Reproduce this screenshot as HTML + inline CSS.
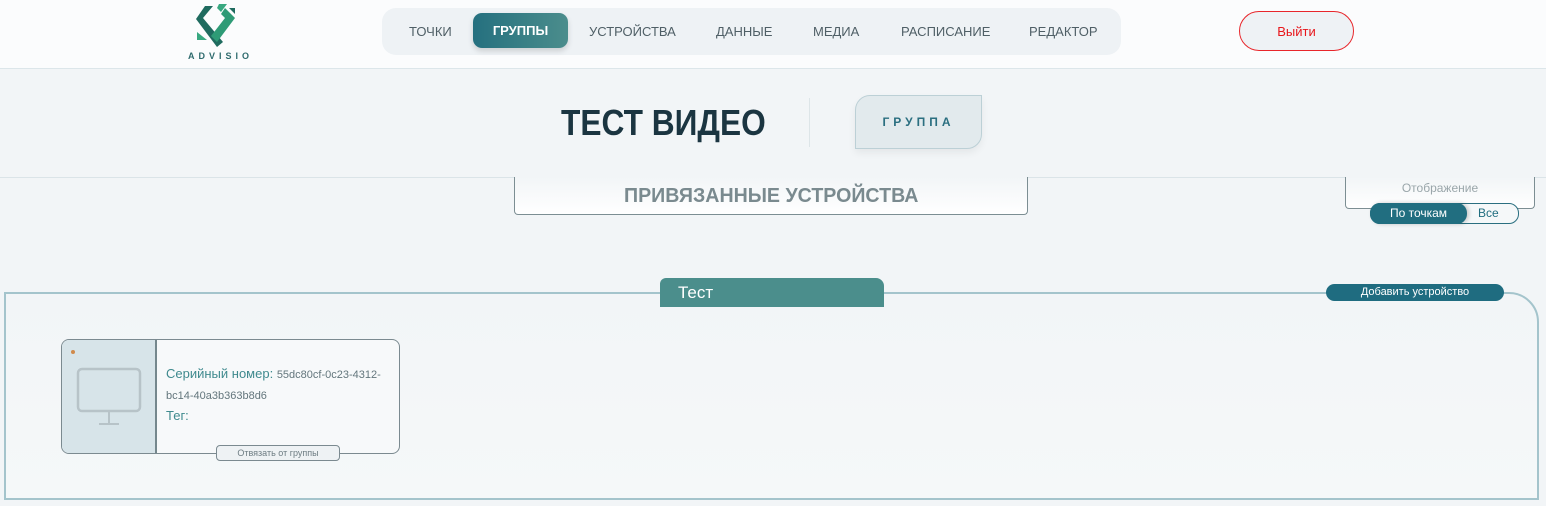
<!DOCTYPE html>
<html><head><meta charset="utf-8"><style>
*{box-sizing:border-box;margin:0;padding:0}
body{width:1546px;height:506px;overflow:hidden;background:#f2f5f7;font-family:"Liberation Sans","DejaVu Sans",sans-serif;position:relative}
.a{position:absolute}
.hdr{left:0;top:0;width:1546px;height:69px;background:#fbfcfd;border-bottom:1px solid #dce6ea}
.nav{left:382px;top:8px;width:739px;height:47px;background:#eef2f5;border-radius:14px}
.ni{position:absolute;top:24px;font-size:13px;color:#4f5f66}
.act{left:473px;top:13px;width:95px;height:35px;border-radius:9px;background:linear-gradient(90deg,#25707f,#4b8d8c);color:#fff;font-size:13px;font-weight:bold;text-align:center;line-height:35px;box-shadow:0 3px 6px rgba(0,0,0,.15)}
</style></head><body>
<div class="a hdr"></div>
<svg class="a" style="left:195px;top:2px" width="42" height="46" viewBox="0 0 42 46">
<polygon points="10,4 18,4 8,16 28,40 22,45 1,17" fill="#1f6b5f"/>
<polygon points="24,2 32,2 26,10 22,6" fill="#38a880"/>
<polygon points="30,6 40,16 22,40 16,34 30,16 26,12" fill="#2e9b76"/>
<polygon points="2,30 12,38 2,38" fill="#38a880"/>
<polygon points="34,6 40,6 40,12" fill="#1f6b5f"/>
</svg>
<div class="a" style="left:188px;top:51px;font-size:9px;letter-spacing:4px;color:#2f6b6e;font-weight:bold">ADVISIO</div>
<div class="a nav"></div>
<div class="a act">ГРУППЫ</div>
<div class="ni" style="left:409px">ТОЧКИ</div>
<div class="ni" style="left:589px">УСТРОЙСТВА</div>
<div class="ni" style="left:716px">ДАННЫЕ</div>
<div class="ni" style="left:813px">МЕДИА</div>
<div class="ni" style="left:901px">РАСПИСАНИЕ</div>
<div class="ni" style="left:1029px">РЕДАКТОР</div>
<div class="a" style="left:1239px;top:11px;width:115px;height:40px;border:1px solid #e8262b;border-radius:20px;background:#eef2f5;color:#e8161b;font-size:13px;text-align:center;line-height:40px">Выйти</div>
<div class="a" style="left:0;top:69px;width:1546px;height:109px;background:#f2f5f7;border-bottom:1px solid #dbe4e8"></div>
<div class="a" style="left:561px;top:102px;font-size:36px;font-weight:bold;color:#1b3541;transform:scaleX(0.88);transform-origin:left">ТЕСТ ВИДЕО</div>
<div class="a" style="left:809px;top:98px;width:1px;height:49px;background:#dde5e8"></div>
<div class="a" style="left:855px;top:95px;width:127px;height:54px;background:#e2eaed;border:1px solid #bcd0d6;border-radius:15px 0 15px 0;box-shadow:0 4px 8px rgba(0,0,0,.06);color:#2b6f80;font-size:12px;font-weight:bold;letter-spacing:4px;text-align:center;line-height:52px">ГРУППА</div>
<div class="a" style="left:514px;top:177px;width:514px;height:38px;border:1px solid #7c8e93;border-top:none;border-radius:0 0 4px 4px;background:linear-gradient(#f2f5f7,#fff);color:#7a8a8f;font-size:20px;font-weight:bold;text-align:center;line-height:38px"><span style="display:inline-block;transform:scaleX(0.98)">ПРИВЯЗАННЫЕ УСТРОЙСТВА</span></div>
<div class="a" style="left:1345px;top:177px;width:190px;height:32px;border:1px solid #7c8e93;border-top:none;border-radius:0 0 4px 4px;background:linear-gradient(#f2f5f7,#fff);color:#9aa6aa;font-size:12px;text-align:center;padding-top:4px">Отображение</div>
<div class="a" style="left:1370px;top:203px;width:149px;height:21px;border:1px solid #2a6f80;border-radius:10px;background:#f5f8f9"></div>
<div class="a" style="left:1370px;top:203px;width:97px;height:21px;border-radius:10px;background:#216e80;color:#fff;font-size:12px;text-align:center;line-height:21px;box-shadow:2px 0 4px rgba(0,0,0,.2)">По точкам</div>
<div class="a" style="left:1478px;top:203px;color:#216e80;font-size:12px;line-height:21px">Все</div>
<div class="a" style="left:4px;top:292px;width:1535px;height:208px;border:2px solid #a4c4cc;border-radius:0 30px 0 0;background:linear-gradient(#f2f5f7,#f5f8f9)"></div>
<div class="a" style="left:660px;top:278px;width:224px;height:29px;background:#4b8e8c;border-radius:6px 8px 0 0;color:#fff;font-size:17px;padding-left:18px;line-height:30px">Тест</div>
<div class="a" style="left:1326px;top:284px;width:178px;height:17px;background:#1f6c80;border-radius:9px;color:#fff;font-size:11px;text-align:center;line-height:17px">Добавить устройство</div>
<div class="a" style="left:61px;top:339px;width:339px;height:115px;border:1px solid #7b8a90;border-radius:8px;background:#f7f9fa;overflow:hidden">
 <div class="a" style="left:0;top:0;width:95px;height:115px;background:#d7e4e9;border-right:2px solid #75878d"></div>
 <div class="a" style="left:9px;top:10px;width:4px;height:4px;border-radius:2px;background:#d08a4c"></div>
 <svg class="a" style="left:14px;top:27px" width="66" height="60"><rect x="2" y="2" width="62" height="42" rx="4" fill="none" stroke="#b7c3c8" stroke-width="2.5"/><line x1="33" y1="44" x2="33" y2="57" stroke="#b7c3c8" stroke-width="2"/><line x1="23" y1="57" x2="43" y2="57" stroke="#b7c3c8" stroke-width="2"/></svg>
 <div class="a" style="left:104px;top:24px;width:230px;font-size:13px;color:#3f8a8e;line-height:19px">Серийный номер: <span style="font-size:11px;color:#63767c">55dc80cf-0c23-4312-bc14-40a3b363b8d6</span><br>Тег:</div>
</div>
<div class="a" style="left:216px;top:445px;width:124px;height:16px;border:1px solid #7b8a90;border-radius:4px;background:#eef2f4;color:#6d7c82;font-size:9px;text-align:center;line-height:14px">Отвязать от группы</div>
</body></html>
